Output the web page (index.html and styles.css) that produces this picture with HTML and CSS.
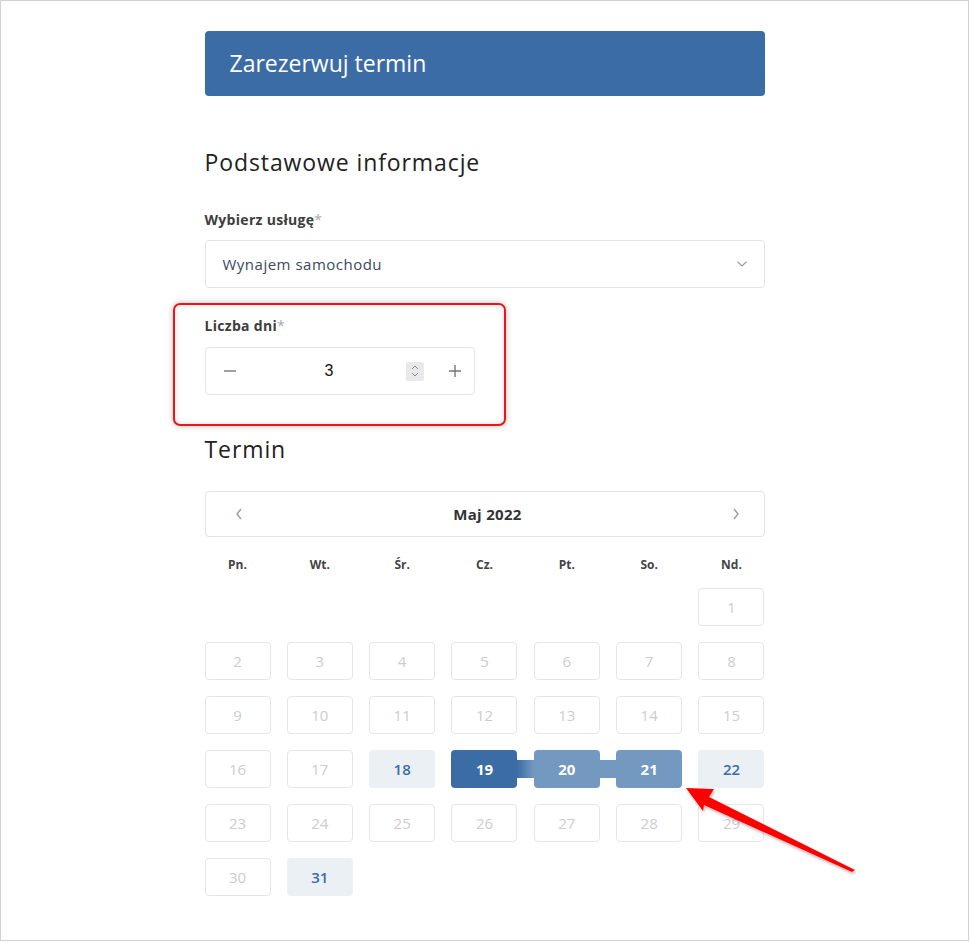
FILE: index.html
```html
<!DOCTYPE html>
<html lang="pl">
<head>
    <meta charset="UTF-8">
    <meta name="viewport" content="width=device-width, initial-scale=1.0">
    <title>Zarezerwuj termin</title>
    <link rel="stylesheet" href="styles.css">
</head>
<body>
<div class="frame">
    <div class="wrap">
        <div class="banner">Zarezerwuj termin</div>

        <h2 class="section first">Podstawowe informacje</h2>

        <div class="field">
            <label class="label">Wybierz usługę<span class="req">*</span></label>
            <div class="select">
                <span>Wynajem samochodu</span>
                <svg width="12" height="8" viewBox="0 0 12 8"><path d="M1.5 1.8 L6 6 L10.5 1.8" fill="none" stroke="#9a9a9a" stroke-width="1.2"/></svg>
            </div>
        </div>

        <div class="field marked">
            <label class="label">Liczba dni<span class="req">*</span></label>
            <div class="number">
                <span class="step">
                    <svg width="14" height="14" viewBox="0 0 14 14"><path d="M1 7 H13" stroke="#777" stroke-width="1.4"/></svg>
                </span>
                <span class="value">3</span>
                <span class="spin">
                    <svg width="10" height="16" viewBox="0 0 10 16"><path d="M2 6 L5 3 L8 6 M2 10 L5 13 L8 10" fill="none" stroke="#888" stroke-width="1"/></svg>
                </span>
                <span class="step">
                    <svg width="14" height="14" viewBox="0 0 14 14"><path d="M1 7 H13 M7 1 V13" stroke="#777" stroke-width="1.4"/></svg>
                </span>
            </div>
        </div>

        <h2 class="section">Termin</h2>

        <div class="cal-head">
            <svg width="10" height="14" viewBox="0 0 10 14"><path d="M7 2 L3 7 L7 12" fill="none" stroke="#9aa0a8" stroke-width="1.5"/></svg>
            <span class="month">Maj 2022</span>
            <svg width="10" height="14" viewBox="0 0 10 14"><path d="M3 2 L7 7 L3 12" fill="none" stroke="#9aa0a8" stroke-width="1.5"/></svg>
        </div>

        <div class="weekdays">
            <span>Pn.</span><span>Wt.</span><span>Śr.</span><span>Cz.</span><span>Pt.</span><span>So.</span><span>Nd.</span>
        </div>

        <div class="days">
            <span class="day off sun">1</span>
            <span class="day off">2</span><span class="day off">3</span><span class="day off">4</span><span class="day off">5</span><span class="day off">6</span><span class="day off">7</span><span class="day off">8</span>
            <span class="day off">9</span><span class="day off">10</span><span class="day off">11</span><span class="day off">12</span><span class="day off">13</span><span class="day off">14</span><span class="day off">15</span>
            <span class="day off">16</span><span class="day off">17</span><span class="day free">18</span><span class="day picked start">19</span><span class="day picked range link-first">20</span><span class="day picked range link">21</span><span class="day free">22</span>
            <span class="day off">23</span><span class="day off">24</span><span class="day off">25</span><span class="day off">26</span><span class="day off">27</span><span class="day off">28</span><span class="day off">29</span>
            <span class="day off">30</span><span class="day free">31</span>
        </div>
    </div>

    <svg class="arrow" width="970" height="942" viewBox="0 0 970 942">
        <defs>
            <filter id="shade" x="-10%" y="-10%" width="130%" height="130%">
                <feDropShadow dx="1" dy="2" stdDeviation="1.5" flood-color="#000" flood-opacity="0.3"/>
            </filter>
        </defs>
        <polygon points="686,788 714,789 709,797 855,870 852,872 704,805 703,811" fill="#ff0000" filter="url(#shade)"/>
    </svg>
</div>
</body>
</html>
```

FILE: styles.css
```css
* {
    box-sizing: border-box;
}

body {
    margin: 0;
    font-family: "Open Sans", Arial, sans-serif;
    color: #222;
}

.frame {
    position: relative;
    width: 969px;
    height: 941px;
    border: 1px solid #d2d2d2;
    background: #fff;
}

.wrap {
    width: 560px;
    margin: 0 auto;
    padding-top: 30px;
}

.banner {
    height: 65px;
    background-color: #3b6ca6;
    border-radius: 4px;
    color: #fff;
    font-size: 23px;
    line-height: 65px;
    padding-left: 25px;
}

.section {
    font-size: 23px;
    font-weight: 400;
    line-height: 32px;
    letter-spacing: 0.9px;
    margin: 0;
    color: #222;
}

.section.first {
    margin-top: 50px;
    margin-bottom: 32px;
}

.label {
    display: block;
    font-size: 14px;
    font-weight: 700;
    line-height: 20px;
    letter-spacing: 0.3px;
    color: #3d3d3d;
    margin-bottom: 10px;
}

.req {
    color: #aaa;
    font-weight: 400;
}

.field {
    margin-bottom: 28px;
}

.select {
    height: 48px;
    border: 1px solid #e4e4e4;
    border-radius: 4px;
    display: flex;
    align-items: center;
    justify-content: space-between;
    padding: 0 16px 0 17px;
    font-size: 15px;
    letter-spacing: 0.5px;
    color: #3a4a5e;
}

.marked {
    position: relative;
    width: 270px;
    margin-bottom: 38px;
}

.marked .label {
    margin-bottom: 11px;
}

.marked::after {
    content: "";
    position: absolute;
    left: -32px;
    top: -13px;
    width: 329px;
    height: 119px;
    border: 2px solid #f01414;
    border-radius: 7px;
    box-shadow: 0 0 6px rgba(0, 0, 0, 0.25), inset 0 0 6px rgba(0, 0, 0, 0.12);
}

.number {
    height: 48px;
    border: 1px solid #e4e4e4;
    border-radius: 4px;
    display: flex;
    align-items: center;
    padding: 0 12px 0 17px;
    font-size: 15px;
}

.step {
    display: flex;
    width: 14px;
    justify-content: center;
}

.value {
    flex: 1;
    text-align: center;
    color: #111;
    font-family: "Liberation Sans", Arial, sans-serif;
    font-size: 16px;
    padding-left: 16px;
}

.spin {
    display: flex;
    align-items: center;
    justify-content: center;
    width: 18px;
    height: 19px;
    background: #e9e9ec;
    border-radius: 2px;
    margin-right: 24px;
}

.cal-head {
    margin-top: 26px;
    height: 46px;
    border: 1px solid #e4e4e4;
    border-radius: 4px;
    display: flex;
    align-items: center;
    justify-content: space-between;
    padding: 0 22px 0 28px;
}

.month {
    font-size: 15px;
    font-weight: 700;
    letter-spacing: 0.3px;
    color: #333;
}

.weekdays {
    display: grid;
    grid-template-columns: repeat(7, 66px);
    justify-content: space-between;
    margin-top: 18px;
    font-size: 12px;
    font-weight: 700;
    color: #444;
    text-align: center;
    line-height: 20px;
}

.days {
    display: grid;
    grid-template-columns: repeat(7, 66px);
    grid-auto-rows: 38px;
    justify-content: space-between;
    row-gap: 16px;
    margin-top: 13px;
}

.day {
    position: relative;
    display: flex;
    align-items: center;
    justify-content: center;
    border-radius: 4px;
    font-size: 15px;
}

.sun {
    grid-column: 7;
}

.off {
    border: 1px solid #e6e6e6;
    color: #cdcdcd;
}

.free {
    background: #ebf0f5;
    color: #3b6ca6;
    font-weight: 600;
}

.picked {
    color: #fff;
    font-weight: 700;
}

.start {
    background: #3b6ca6;
}

.range {
    background: #7499c0;
}

.link-first::before,
.link::before {
    content: "";
    position: absolute;
    right: 100%;
    top: 10px;
    width: 17px;
    height: 18px;
}

.link-first::before {
    background: linear-gradient(to right, #3b6ca6, #7499c0);
}

.link::before {
    background: #7499c0;
}

.arrow {
    position: absolute;
    left: -1px;
    top: -1px;
    pointer-events: none;
}
```
